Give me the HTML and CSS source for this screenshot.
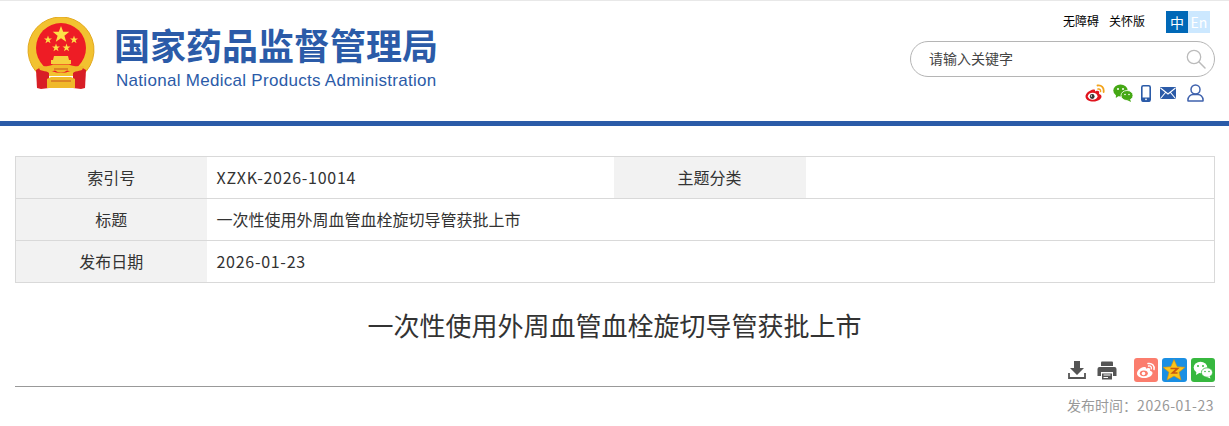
FILE: index.html
```html
<!DOCTYPE html>
<html lang="zh-CN">
<head>
    <meta charset="UTF-8">
    <meta name="viewport" content="width=device-width, initial-scale=1.0">
    <title>一次性使用外周血管血栓旋切导管获批上市</title>
    <link rel="stylesheet" href="styles.css">
</head>
<body>

    <header class="header">
        <a class="logo" href="#">
            <svg class="emblem" viewBox="0 0 68 72" width="68" height="72">
                <path d="M13.700 59 A33 33 0 1 1 54.300 59 Z" fill="#f2c230"/>
                <path d="M13.700 59 A33 33 0 1 1 54.300 59" fill="none" stroke="#e3a920" stroke-width="1"/>
                <circle cx="34" cy="31" r="25" fill="#ee1c25"/>
                <polygon fill="#fde047" points="34,9 36.200,14.800 42.300,14.800 37.400,18.700 39.200,24.800 34,21.200 28.800,24.800 30.600,18.700 25.700,14.800 31.800,14.800"/>
                <polygon fill="#fde047" points="21,18.500 22,21.500 25,21.500 22.600,23.300 23.500,26.300 21,24.500 18.500,26.300 19.400,23.300 17,21.500 20,21.500"/>
                <polygon fill="#fde047" points="47,18.500 48,21.500 51,21.500 48.600,23.300 49.500,26.300 47,24.500 44.500,26.300 45.400,23.300 43,21.500 46,21.500"/>
                <polygon fill="#fde047" points="29,26.500 30,29.500 33,29.500 30.600,31.300 31.500,34.300 29,32.500 26.500,34.300 27.400,31.300 25,29.500 28,29.500"/>
                <polygon fill="#fde047" points="39.500,26.500 40.500,29.500 43.500,29.500 41.100,31.300 42,34.300 39.500,32.500 37,34.300 37.900,31.300 35.500,29.500 38.500,29.500"/>
                <path d="M27 39 H41 L42 43 H44 V47 H24 V43 H26 Z" fill="#f6cf3e"/>
                <path d="M9 53 L14 50 L22 56 V71 L14 72 L10 71 Z" fill="#d81e26"/>
                <path d="M59 53 L54 50 L46 56 V71 L54 72 L58 71 Z" fill="#d81e26"/>
                <path d="M11 49 Q22 50 26 47.500 H42 Q46 50 57 49 L55 53 Q46 56 40 53.500 Q34 58 28 53.500 Q22 56 13 53 Z" fill="#f0b92a"/>
                <path d="M20 62 L24 60 H44 L48 62 V71 H20 Z" fill="#f0b92a"/>
                <path d="M27 52 H41 M24 64 H44" stroke="#c8501e" stroke-width="1"/>
            </svg>
            <div class="logo-text">
                <div class="logo-cn">国家药品监督管理局</div>
                <div class="logo-en">National Medical Products Administration</div>
            </div>
        </a>

        <div class="header-right">
            <div class="top-links">
                <a href="#">无障碍</a>
                <a href="#">关怀版</a>
                <div class="lang">
                    <a class="lang-cn" href="#">中</a>
                    <a class="lang-en" href="#">En</a>
                </div>
            </div>

            <div class="search">
                <input type="text" placeholder="请输入关键字">
                <svg viewBox="0 0 20 20" width="20" height="20">
                    <circle cx="8" cy="8" r="6.700" fill="none" stroke="#bbb" stroke-width="1.300"/>
                    <path d="M12.800 12.800 L19 19" stroke="#bbb" stroke-width="1.500" stroke-linecap="round"/>
                </svg>
            </div>

            <div class="social">
                <svg viewBox="0 0 20 18" width="20" height="18">
                    <path d="M8.500 5.500 C4.500 6 .5 9.500 .5 12.500 C.5 15.500 4 17.500 8.500 17.500 C13 17.500 16.500 15 16.500 12.500 C16.500 10.800 15 10.200 14 9.900 C14.600 8.300 14.200 6.800 12.500 6.800 C11.500 6.800 10.500 7.200 10 7.500 C10.300 5.800 9.700 5.300 8.500 5.500 Z" fill="#e0141e"/>
                    <ellipse cx="7.700" cy="12.300" rx="4.800" ry="3.500" fill="#fff"/>
                    <circle cx="7.200" cy="12.500" r="2.400" fill="#333"/>
                    <circle cx="6.500" cy="12" r=".7" fill="#fff"/>
                    <path d="M12.500 1.500 C16.500 .8 19.300 3.800 18.600 8" fill="none" stroke="#f2a31b" stroke-width="1.800" stroke-linecap="round"/>
                    <path d="M13 5 C14.800 4.600 15.800 5.800 15.500 7.500" fill="none" stroke="#f2a31b" stroke-width="1.500" stroke-linecap="round"/>
                </svg>
                <svg viewBox="0 0 20 18" width="20" height="18">
                    <ellipse cx="7.500" cy="6.500" rx="7.200" ry="6" fill="#45a815"/>
                    <path d="M3 10 L2.800 14 L7 11 Z" fill="#45a815"/>
                    <ellipse cx="14" cy="11.500" rx="6" ry="5" fill="#45a815" stroke="#fff" stroke-width=".8"/>
                    <path d="M17 15 L18 18 L14 16 Z" fill="#45a815"/>
                    <circle cx="5" cy="5" r="1" fill="#fff"/>
                    <circle cx="10" cy="5" r="1" fill="#fff"/>
                    <circle cx="12" cy="10.500" r=".8" fill="#fff"/>
                    <circle cx="16" cy="10.500" r=".8" fill="#fff"/>
                </svg>
                <svg viewBox="0 0 10 17" width="10" height="17">
                    <rect x=".8" y=".8" width="8.400" height="15.400" rx="1.500" fill="#fff" stroke="#2b5ba8" stroke-width="1.600"/>
                    <rect x="1" y="12.500" width="8" height="4" fill="#2b5ba8"/>
                    <circle cx="5" cy="14.300" r=".9" fill="#fff"/>
                </svg>
                <svg class="icon-mail" viewBox="0 0 16 12" width="16" height="12">
                    <rect width="16" height="12" rx="1" fill="#2b5ba8"/>
                    <path d="M.5 1 L8 7 L15.500 1 M.5 11.500 L5.500 5.500 M15.500 11.500 L10.500 5.500" fill="none" stroke="#fff" stroke-width="1.100"/>
                </svg>
                <svg viewBox="0 0 17 18" width="17" height="18">
                    <circle cx="8.500" cy="5.500" r="4.500" fill="none" stroke="#3f62ad" stroke-width="1.500"/>
                    <path d="M1 17 C.5 12.500 4 10.500 6 10.500 H11 C13 10.500 16.500 12.500 16 17 Z" fill="none" stroke="#3f62ad" stroke-width="1.500" stroke-linejoin="round"/>
                </svg>
            </div>
        </div>
    </header>

    <main class="content">
        <table class="meta">
            <colgroup>
                <col class="col-a">
                <col class="col-b">
                <col class="col-c">
                <col>
            </colgroup>
            <tr>
                <th>索引号</th>
                <td class="latin">XZXK-2026-10014</td>
                <th>主题分类</th>
                <td></td>
            </tr>
            <tr>
                <th>标题</th>
                <td colspan="3">一次性使用外周血管血栓旋切导管获批上市</td>
            </tr>
            <tr>
                <th>发布日期</th>
                <td class="latin" colspan="3">2026-01-23</td>
            </tr>
        </table>

        <h1 class="title">一次性使用外周血管血栓旋切导管获批上市</h1>

        <div class="tools">
            <svg viewBox="0 0 18 18" width="18" height="18">
                <path d="M6 0 H12 V7 H16 L9 14 L2 7 H6 Z" fill="#555"/>
                <path d="M1 12 V17 H17 V12" fill="none" stroke="#555" stroke-width="1.800"/>
            </svg>
            <svg class="tool-print" viewBox="0 0 20 19" width="20" height="19">
                <path d="M4 5 V1.500 Q4 .5 5 .5 H15 Q16 .5 16 1.500 V5 Z" fill="#555"/>
                <path d="M2.500 6 H17.500 Q19.500 6 19.500 8 V15 H16 V11 H4 V15 H.5 V8 Q.5 6 2.500 6 Z" fill="#555"/>
                <path d="M5 12.500 H15 V18.500 H5 Z" fill="#555"/>
                <path d="M6.500 14 H13.500 M6.500 16.500 H11" stroke="#fff" stroke-width="1"/>
            </svg>
            <div class="share share-weibo">
                <svg viewBox="0 0 24 24" width="24" height="24">
                    <path d="M10 9 C6.500 9.500 3 12.500 3 15.500 C3 18 6 20 10.500 20 C15 20 18.500 17.500 18.500 15 C18.500 13.500 17 13 16 12.700 C16.500 11 16 10 14.500 10 C13.500 10 12.700 10.500 12 10.700 C12.300 9.300 11.500 8.800 10 9 Z" fill="#fff"/>
                    <ellipse cx="9.800" cy="15.300" rx="4" ry="2.900" fill="#fb7d6d"/>
                    <circle cx="9.500" cy="15.500" r="1.800" fill="#fff"/>
                    <path d="M14 5.500 C18 4.800 20.800 7.500 20 11.500" fill="none" stroke="#fff" stroke-width="1.500" stroke-linecap="round"/>
                    <path d="M14.500 8 C16.500 7.600 17.800 8.800 17.300 10.800" fill="none" stroke="#fff" stroke-width="1.300" stroke-linecap="round"/>
                </svg>
            </div>
            <div class="share share-qzone">
                <svg viewBox="0 0 24 24" width="24" height="24">
                    <polygon points="12,1.500 15.200,8.700 23,9.300 17,14.300 19,22 12,18 5,22 7,14.300 1,9.300 8.800,8.700" fill="#fcc419" stroke="#d98e0b" stroke-width=".6"/>
                    <path d="M8.500 10.500 H15.500 L10.500 15 H15.500" fill="none" stroke="#c9570f" stroke-width="1.700"/>
                </svg>
            </div>
            <div class="share share-wechat">
                <svg viewBox="0 0 24 24" width="24" height="24">
                    <ellipse cx="9.500" cy="9.500" rx="6.800" ry="5.800" fill="#fff"/>
                    <path d="M5.500 13 L5 17 L9 14.500 Z" fill="#fff"/>
                    <ellipse cx="16" cy="14.500" rx="5.600" ry="4.700" fill="#fff" stroke="#37b83f" stroke-width=".8"/>
                    <path d="M18.500 18 L19.500 20.500 L16 19 Z" fill="#fff"/>
                    <circle cx="7" cy="8" r="1" fill="#37b83f"/>
                    <circle cx="12" cy="8" r="1" fill="#37b83f"/>
                    <circle cx="14" cy="13.500" r=".8" fill="#37b83f"/>
                    <circle cx="18" cy="13.500" r=".8" fill="#37b83f"/>
                </svg>
            </div>
        </div>

        <div class="pubdate">发布时间：<span>2026-01-23</span></div>
    </main>

</body>
</html>
```

FILE: styles.css
```css
html, body {
    overflow: hidden;
}
body {
    margin: 0;
    background: #fff;
    color: #333;
    font-family: "Noto Sans CJK SC", "Noto Sans", sans-serif;
    border-top: 1px solid #e8e8e8;
}
a {
    color: inherit;
    text-decoration: none;
}

/* шапка */
.header {
    height: 120px;
    padding: 0 14px 0 27px;
    display: flex;
    justify-content: space-between;
    border-bottom: 5px solid #2b5ba8;
}
.logo {
    display: flex;
    padding-top: 16px;
    align-self: flex-start;
}
.emblem {
    display: block;
}
.logo-text {
    margin-left: 21px;
    color: #2b5ba8;
}
.logo-cn {
    font-size: 36px;
    font-weight: 700;
    line-height: 44px;
    margin: 5px 0 0 -2px;
    white-space: nowrap;
}
.logo-en {
    font-family: "Liberation Sans", Arial, sans-serif;
    font-size: 17px;
    line-height: 20px;
    letter-spacing: 0.29px;
    margin-top: 5px;
    white-space: nowrap;
}

.header-right {
    width: 305px;
    display: flex;
    flex-direction: column;
    align-items: flex-end;
    padding-top: 10px;
}
.top-links {
    display: flex;
    align-items: center;
    height: 22px;
    padding-right: 5px;
    font-size: 12px;
    color: #000;
}
.top-links > a {
    margin: 0 10px 3px 0;
}
.lang {
    display: flex;
    margin-left: 11px;
    line-height: 22px;
    font-size: 14px;
}
.lang a {
    width: 22px;
    text-align: center;
    color: #fff;
}
.lang-cn {
    background: #0068b7;
}
.lang-en {
    background: #cce8ff;
}
.search {
    width: 305px;
    height: 36px;
    box-sizing: border-box;
    margin-top: 8px;
    padding: 0 8px 0 18px;
    display: flex;
    align-items: center;
    justify-content: space-between;
    border: 1px solid #b5b5b5;
    border-radius: 18px;
}
.search input {
    border: none;
    outline: none;
    padding: 0 0 2px;
    width: 200px;
    font: 14px "Noto Sans CJK SC", sans-serif;
}
.search input::placeholder {
    color: #444;
    opacity: 1;
}
.social {
    display: flex;
    align-items: center;
    gap: 8px;
    margin-top: 7px;
    padding-right: 11px;
    height: 18px;
}
.icon-mail {
    margin: 0 3px 0 1px;
}

/* таблица */
.content {
    margin: 30px 14px 0 15px;
}
.meta {
    width: 1200px;
    table-layout: fixed;
    border-collapse: collapse;
    border: 1px solid #d9d9d9;
    font-size: 16px;
}
.col-a {
    width: 191px;
}
.col-b {
    width: 407px;
}
.col-c {
    width: 192px;
}
.meta tr {
    height: 42px;
    border-bottom: 1px solid #d9d9d9;
}
.meta th {
    background: #f2f2f2;
    font-weight: 400;
    padding: 0 0 2px;
}
.meta td {
    padding: 0 10px 2px;
}
.meta .latin {
    letter-spacing: 0.72px;
}
.title {
    margin: 23px 0 0;
    padding-right: 1px;
    font-size: 26px;
    font-weight: 400;
    line-height: 38px;
    text-align: center;
}
.tools {
    display: flex;
    justify-content: flex-end;
    align-items: center;
    margin-top: 14px;
    padding-bottom: 4px;
    border-bottom: 1px solid #999;
}
.tool-print {
    margin-left: 11px;
    margin-right: 17px;
}
.share {
    width: 24px;
    height: 24px;
    border-radius: 3px;
    margin-left: 4px;
}
.share svg {
    display: block;
}
.share-weibo {
    margin-left: 0;
    background: #fb7d6d;
}
.share-qzone {
    width: 25px;
    background: #1a8fe3;
}
.share-wechat {
    background: #37b83f;
}
.pubdate {
    margin-top: 8px;
    padding-right: 1px;
    text-align: right;
    font-size: 14px;
    line-height: 20px;
    color: #999;
}
.pubdate span {
    letter-spacing: 0.5px;
}
```
